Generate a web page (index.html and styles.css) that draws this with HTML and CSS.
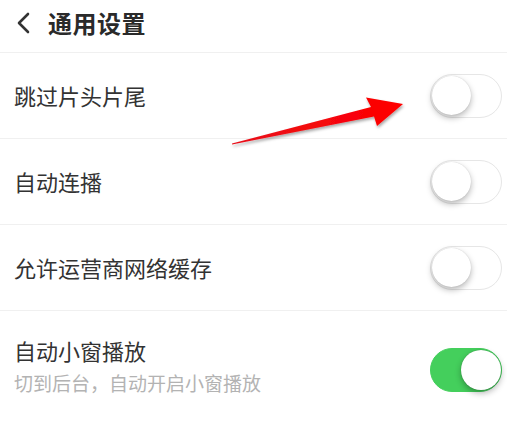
FILE: index.html
```html
<!DOCTYPE html>
<html lang="zh">
<head>
<meta charset="utf-8">
<link rel="stylesheet" href="styles.css">
</head>
<body>
<div class="page">
  <header class="header">
    <svg class="back" width="16" height="22" viewBox="0 0 16 22"><polyline points="12,2 3,11 12,20" fill="none" stroke="#333" stroke-width="2.6" stroke-linecap="round" stroke-linejoin="round"/></svg>
    <h1 class="title">通用设置</h1>
  </header>
  <div class="row">
    <div class="label">跳过片头片尾</div>
    <div class="switch"><span class="knob"></span></div>
  </div>
  <div class="row">
    <div class="label">自动连播</div>
    <div class="switch"><span class="knob"></span></div>
  </div>
  <div class="row">
    <div class="label">允许运营商网络缓存</div>
    <div class="switch"><span class="knob"></span></div>
  </div>
  <div class="row row-last">
    <div class="texts">
      <div class="label">自动小窗播放</div>
      <div class="sub">切到后台，自动开启小窗播放</div>
    </div>
    <div class="switch on"><span class="knob"></span></div>
  </div>
  <svg class="arrow" width="507" height="422" viewBox="0 0 507 422">
    <defs>
      <filter id="sh" x="-10%" y="-30%" width="120%" height="160%">
        <feDropShadow dx="1" dy="2" stdDeviation="1.5" flood-color="#000" flood-opacity="0.35"/>
      </filter>
      <linearGradient id="rg" x1="0" y1="0" x2="1" y2="0">
        <stop offset="0" stop-color="#e8101a"/>
        <stop offset="1" stop-color="#ff0000"/>
      </linearGradient>
    </defs>
    <polygon filter="url(#sh)" fill="url(#rg)" points="232,143.5 371,107 366,97.5 403,104 377,126 374,116.5 232,144.5"/>
  </svg>
</div>
</body>
</html>
```
FILE: styles.css
```css
* { box-sizing: border-box; }
html, body { margin: 0; padding: 0; background: #fff; }
body {
  font-family: "Noto Sans CJK SC", "Noto Sans", sans-serif;
  color: #333;
}
.page {
  position: relative;
  width: 507px;
  height: 422px;
  overflow: hidden;
}
.header {
  height: 53px;
  display: flex;
  align-items: center;
  padding: 0 0 6px 16px;
  border-bottom: 1px solid #f0f0f0;
}
.back { flex: none; margin-right: 16px; }
.title {
  margin: 0;
  font-size: 24px;
  font-weight: 700;
  line-height: 1;
  color: #2a2a2a;
  letter-spacing: 0.5px;
}
.row {
  height: 86px;
  display: flex;
  align-items: center;
  justify-content: space-between;
  padding: 0 5px 0 14px;
  border-bottom: 1px solid #f0f0f0;
}
.row-last {
  height: 116px;
  border-bottom: none;
  align-items: flex-start;
  padding-top: 30px;
}
.label {
  font-size: 22px;
  line-height: 1;
  color: #333;
  margin-top: -2px;
}
.texts { display: flex; flex-direction: column; gap: 12px; }
.sub {
  font-size: 19px;
  line-height: 1;
  color: #b3b3b3;
}
.switch {
  position: relative;
  width: 72px;
  height: 44px;
  border-radius: 22px;
  background: #fff;
  border: 1.5px solid #e6e6e6;
  flex: none;
}
.knob {
  position: absolute;
  top: 1px;
  left: 1px;
  width: 39px;
  height: 39px;
  border-radius: 50%;
  background: #fff;
  box-shadow: 0 3px 6px rgba(0,0,0,0.28), 0 0 1px rgba(0,0,0,0.2);
}
.switch.on {
  background: #44cf5c;
  border-color: #44cf5c;
  margin-top: 7px;
}
.switch.on .knob {
  left: auto;
  right: 0;
  top: 0.5px;
  width: 40px;
  height: 40px;
  box-shadow: 0 3px 6px rgba(0,0,0,0.3), 0 0 1px rgba(0,0,0,0.3);
}
.arrow {
  position: absolute;
  left: 0;
  top: 0;
  pointer-events: none;
}
```
